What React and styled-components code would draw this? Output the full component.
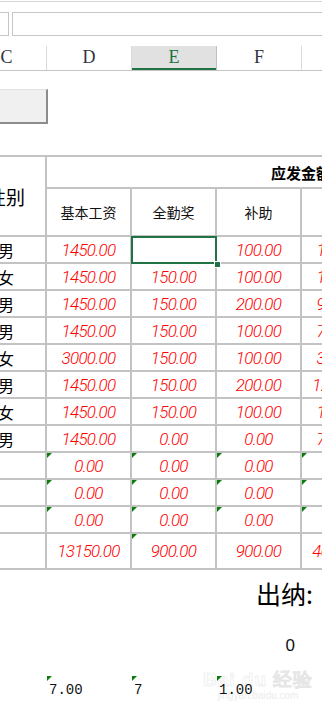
import React from 'react';
import styled, { createGlobalStyle } from 'styled-components';

const GlobalStyle = createGlobalStyle`
  html, body {
    margin: 0;
    padding: 0;
    background: #ffffff;
    overflow: hidden;
  }
  body {
    font-family: "Noto Sans CJK SC", "Noto Sans", sans-serif;
  }
`;

const COLS = '78px repeat(6, 83px)';

const Page = styled.div`
  position: relative;
  width: 322px;
  height: 713px;
  overflow: hidden;
  background: #fff;
`;

const TopRule = styled.div`
  margin-top: 1px;
  height: 1px;
  background: #d4d4d4;
`;

const FormulaBar = styled.div`
  display: flex;
  gap: 3px;
  margin: 10px -20px 0 -40px;
  height: 24px;
`;

const NameBox = styled.div`
  width: 49px;
  border: 1px solid #c6c6c6;
  box-sizing: border-box;
  background: #fff;
`;

const FormulaInput = styled.div`
  flex: 1;
  border: 1px solid #c6c6c6;
  box-sizing: border-box;
  background: #fff;
`;

const Sheet = styled.div`
  margin-left: -33px;
`;

const ColumnHeaders = styled.div`
  display: grid;
  grid-template-columns: 80px repeat(5, 85px);
  margin-top: 10px;
  height: 25px;
  border-bottom: 1px solid #c4c4c4;
  box-sizing: border-box;
`;

const ColLetter = styled.div`
  display: flex;
  align-items: center;
  justify-content: center;
  border-right: 1px solid ${(p) => (p.$active ? '#c0c0c0' : '#dadada')};
  background: ${(p) => (p.$active ? '#e1e1e1' : '#fff')};
  box-shadow: ${(p) => (p.$active ? 'inset 0 -2px 0 #217346' : 'none')};
  color: ${(p) => (p.$active ? '#217346' : '#2f3542')};
  font-family: "Liberation Serif", "DejaVu Serif", serif;
  font-size: 18px;
  box-sizing: border-box;
  padding-bottom: 1px;
`;

const FormButton = styled.div`
  width: 81px;
  height: 35px;
  margin-top: 18px;
  box-sizing: border-box;
  background: #f0f0f0;
  border-top: 1px solid #e3e3e3;
  border-left: 1px solid #e3e3e3;
  border-right: 2px solid #8c8c8c;
  border-bottom: 2px solid #8c8c8c;
`;

const Grid = styled.div`
  display: grid;
  grid-template-columns: ${COLS};
  grid-template-rows: 30px 46px repeat(11, 25px) 34px;
  gap: 2px;
  padding: 2px 0 2px 0;
  margin-top: 31px;
  background: #c3c3c3;
`;

const Cell = styled.div`
  position: relative;
  background: #fff;
  display: flex;
  align-items: center;
  justify-content: center;
  white-space: nowrap;
  min-width: 0;

  ${(p) => p.$selected && `
    z-index: 2;
    &::after {
      content: '';
      position: absolute;
      left: -1px;
      top: -1px;
      right: -2px;
      bottom: -2px;
      border: 2px solid #217346;
    }
    &::before {
      content: '';
      position: absolute;
      right: -6px;
      bottom: -6px;
      width: 5px;
      height: 5px;
      background: #217346;
      border: 1px solid #fff;
      z-index: 3;
    }
  `}
`;

const SexHead = styled(Cell)`
  grid-row: span 2;
  font-size: 19px;
  color: #000;
`;

const GroupHead = styled(Cell)`
  grid-column: span 6;
  font-size: 15px;
  font-weight: 700;
  color: #000;
`;

const SubHead = styled(Cell)`
  font-size: 14px;
  color: #111;
`;

const SexCell = styled(Cell)`
  font-size: 16px;
  color: #000;
`;

const Amount = styled.span`
  color: #ff0000;
  font-family: Roboto, "Open Sans", sans-serif;
  font-weight: 300;
  font-style: italic;
  font-size: 17px;
  letter-spacing: -0.7px;
`;

const Flag = styled.span`
  position: absolute;
  left: 0;
  top: 0;
  width: 0;
  height: 0;
  border-top: 5px solid #0b7d0b;
  border-right: 5px solid transparent;
`;

const SignRow = styled.div`
  height: 46px;
  display: flex;
  align-items: center;
  padding-left: 289px;
  font-size: 25px;
  color: #000;
  white-space: nowrap;
`;

const PlainRow = styled.div`
  display: grid;
  grid-template-columns: ${COLS};
  gap: 2px;
  height: ${(p) => p.$h}px;
`;

const PlainCell = styled.div`
  position: relative;
  display: flex;
  align-items: center;
  justify-content: ${(p) => (p.$right ? 'flex-end' : 'flex-start')};
  padding: ${(p) => (p.$right ? '0 5px 0 0' : '0 0 0 2px')};
  font-family: ${(p) => (p.$mono ? '"Liberation Mono", "DejaVu Sans Mono", monospace' : '"Liberation Sans", Arial, sans-serif')};
  font-size: ${(p) => (p.$mono ? '14px' : '17px')};
  color: #111;
  padding-top: ${(p) => (p.$mono ? '4px' : '0')};
`;

const Watermark = styled.div`
  position: absolute;
  left: 203px;
  top: 667px;
  display: flex;
  flex-direction: column;
  align-items: center;
  color: transparent;
  -webkit-text-stroke: 0.5px #e6e6e6;
  pointer-events: none;
`;

const MarkTitle = styled.div`
  font-family: "Liberation Sans", Arial, sans-serif;
  font-weight: 700;
  font-size: 19px;
  letter-spacing: 1px;
`;

const MarkUrl = styled.div`
  font-family: "Liberation Sans", Arial, sans-serif;
  font-size: 10px;
  -webkit-text-stroke: 0;
  color: #ececec;
  margin-top: -3px;
`;

const rows = [
  { sex: '男', d: '1450.00', e: '', f: '100.00', g: '1000.00', sel: true },
  { sex: '女', d: '1450.00', e: '150.00', f: '100.00', g: '1000.00' },
  { sex: '男', d: '1450.00', e: '150.00', f: '200.00', g: '9000.00' },
  { sex: '男', d: '1450.00', e: '150.00', f: '100.00', g: '7000.00' },
  { sex: '女', d: '3000.00', e: '150.00', f: '100.00', g: '3000.00' },
  { sex: '男', d: '1450.00', e: '150.00', f: '200.00', g: '12000.00' },
  { sex: '女', d: '1450.00', e: '150.00', f: '100.00', g: '1000.00' },
  { sex: '男', d: '1450.00', e: '0.00', f: '0.00', g: '7000.00' },
  { sex: '', d: '0.00', e: '0.00', f: '0.00', g: '', flags: ['d', 'e', 'f', 'g'] },
  { sex: '', d: '0.00', e: '0.00', f: '0.00', g: '', flags: ['d', 'e', 'f', 'g'] },
  { sex: '', d: '0.00', e: '0.00', f: '0.00', g: '', flags: ['d', 'e', 'f', 'g'] },
  { sex: '', d: '13150.00', e: '900.00', f: '900.00', g: '40000.00', flags: ['e'] },
];

function DataRow({ row }) {
  const flags = row.flags || [];
  return (
    <>
      <SexCell>{row.sex}</SexCell>
      {['d', 'e', 'f', 'g'].map((k) => (
        <Cell key={k} $selected={row.sel && k === 'e'}>
          {flags.includes(k) && <Flag />}
          {row[k] && <Amount>{row[k]}</Amount>}
        </Cell>
      ))}
      <Cell />
      <Cell />
    </>
  );
}

export default function App() {
  return (
    <Page>
      <GlobalStyle />
      <Watermark>
        <MarkTitle>Bai du 经验</MarkTitle>
        <MarkUrl>jingyan.baidu.com</MarkUrl>
      </Watermark>
      <TopRule />
      <FormulaBar>
        <NameBox />
        <FormulaInput />
      </FormulaBar>
      <Sheet>
        <ColumnHeaders>
          {['C', 'D', 'E', 'F', 'G', 'H'].map((c) => (
            <ColLetter key={c} $active={c === 'E'}>{c === 'G' || c === 'H' ? '' : c}</ColLetter>
          ))}
        </ColumnHeaders>
        <FormButton />
        <Grid>
          <SexHead>性别</SexHead>
          <GroupHead>应发金额</GroupHead>
          <SubHead>基本工资</SubHead>
          <SubHead>全勤奖</SubHead>
          <SubHead>补助</SubHead>
          <SubHead />
          <SubHead />
          <SubHead />
          {rows.map((r, i) => (
            <DataRow key={i} row={r} />
          ))}
        </Grid>
        <SignRow>出纳:</SignRow>
        <PlainRow $h={60}>
          <PlainCell />
          <PlainCell />
          <PlainCell />
          <PlainCell $right>0</PlainCell>
        </PlainRow>
        <PlainRow $h={24}>
          <PlainCell />
          <PlainCell $mono><Flag />7.00</PlainCell>
          <PlainCell $mono><Flag />7</PlainCell>
          <PlainCell $mono><Flag />1.00</PlainCell>
        </PlainRow>
      </Sheet>
    </Page>
  );
}
